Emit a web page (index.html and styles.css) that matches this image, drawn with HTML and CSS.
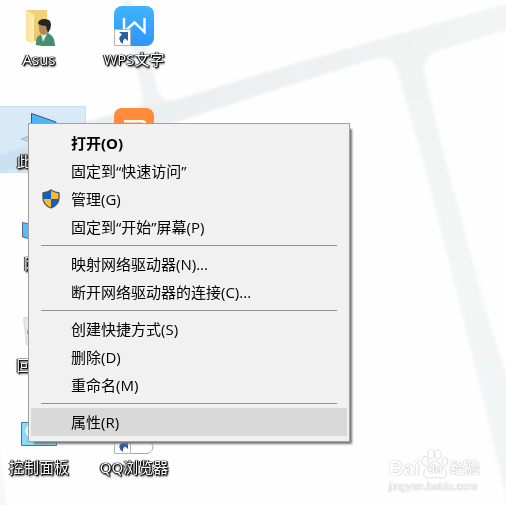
FILE: index.html
```html
<!DOCTYPE html>
<html lang="zh-CN">
<head>
<meta charset="utf-8">
<meta name="viewport" content="width=device-width, initial-scale=1">
<title>桌面</title>
<link rel="stylesheet" href="styles.css">
</head>
<body>
<svg class="wallpaper" viewBox="0 0 506 505" preserveAspectRatio="xMinYMin slice" aria-hidden="true">
  <defs>
    <filter id="soft" x="-5%" y="-5%" width="110%" height="110%"><feGaussianBlur stdDeviation="1.5"/></filter>
    <linearGradient id="bar" x1="0" y1="0" x2="1" y2="0">
      <stop offset="0" stop-color="#e3eeef"/><stop offset=".35" stop-color="#ebefef"/><stop offset="1" stop-color="#f3f4f4"/>
    </linearGradient>
    <linearGradient id="stem" x1="0" y1="0" x2="0" y2="1">
      <stop offset="0" stop-color="#f1f2f2"/><stop offset=".5" stop-color="#f4f5f5"/><stop offset="1" stop-color="#f0f5f4"/>
    </linearGradient>
  </defs>
  <g filter="url(#soft)">
    <path fill="#f0f3f4" d="M122 0h10l8 25 12 37 5 25q3 12 15 15l-20 18-12-8q4-10 1-25L131 45z"/>
    <path fill="url(#bar)" d="M-4 156Q40 146 86 122L140 106 176 100 290 65 395 35 510 3V29L440 50Q424 55 424 71L410 74 396 68Q392 55 377 58L300 82 176 122 86 140Q40 166-4 172z"/>
    <path fill="url(#stem)" d="M390 55L426 52Q423 60 424 71L440 140 463 225 487 315 510 385V510L502 480 476 370 446 250 423 160 397 70z"/>
    <path fill="#f5f7fa" d="M-4 440L1 460 7 510H-4z"/>
  </g>
</svg>

<main class="desktop">
  <button class="tile" type="button">
    <svg class="icon" viewBox="0 0 40 40" aria-hidden="true">
      <defs>
        <linearGradient id="fold"><stop offset="0" stop-color="#fae09a"/><stop offset="1" stop-color="#ffeeb8"/></linearGradient>
        <linearGradient id="back" x2="0" y2="1"><stop offset="0" stop-color="#f3d47c"/><stop offset="1" stop-color="#e9c564"/></linearGradient>
      </defs>
      <path fill="url(#back)" d="M7 4h21v31H14z"/>
      <path fill="url(#fold)" d="M7 4l8 5v26l-1 3-7-3.500z"/>
      <path fill="#458f70" d="M17 39q-1-10 7-11l5-1q7 3 7 13-10 1-19-1z"/>
      <path fill="#dceee6" d="M22 28l2 8 4-8z"/>
      <path fill="#b7845c" d="M20 18q0-4 5-3 5 1 5 7-1 7-5 7-5 0-5-7z"/>
      <path fill="#252525" d="M19 18q0-5 7-5 6 0 6 6 0 4-3 8l-1-3-1-4q-4 0-8-2z"/>
    </svg>
    <span class="label">Asus</span>
  </button>
  <button class="tile selected" type="button">
    <svg class="icon" viewBox="0 0 40 40" aria-hidden="true">
      <path fill="#4bb6f5" stroke="#47545c" d="M12.500 5.500L37 14v18L12.500 25z"/>
      <path fill="#c9cdd0" stroke="#9a9fa2" stroke-width=".6" d="M2 31l10-4 20 7-10 4z"/>
    </svg>
    <span class="label">此电脑</span>
  </button>
  <button class="tile" type="button">
    <svg class="icon" viewBox="0 0 40 40" aria-hidden="true">
      <path fill="#55bdf7" stroke="#536a78" d="M3.500 12.500L24 17v15L3.500 27z"/>
    </svg>
    <span class="label">网络</span>
  </button>
  <button class="tile" type="button">
    <svg class="icon" viewBox="0 0 40 40" aria-hidden="true">
      <path fill="#e6e8ea" stroke="#cdd0d2" stroke-width=".7" d="M4.500 6l6-1h22l-4 29-21-1z"/>
      <path fill="#3794d1" d="M9 16l3 5-4 1z"/>
    </svg>
    <span class="label">回收站</span>
  </button>
  <button class="tile" type="button">
    <svg class="icon" viewBox="0 0 40 40" aria-hidden="true">
      <path fill="#87dcfb" stroke="#2b7fa8" d="M2.500 8.500h35v23h-35z"/>
      <circle cx="13" cy="17" r="5.500" fill="none" stroke="#f2fcff" stroke-width="2"/>
      <path stroke="#e4af42" d="M7 27.500h8"/>
      <path stroke="#1683bd" stroke-width="2" d="M15 28h14"/>
    </svg>
    <span class="label">控制面板</span>
  </button>
  <button class="tile" type="button">
    <svg class="icon" viewBox="0 0 40 40" aria-hidden="true">
      <defs><linearGradient id="wps" x2="0" y2="1"><stop offset="0" stop-color="#3fb4ff"/><stop offset="1" stop-color="#3093fc"/></linearGradient></defs>
      <rect width="40" height="40" rx="8" fill="url(#wps)"/>
      <path fill="none" stroke="#fff" stroke-width="2.400" d="M10 12v14L20.500 16.500 30.500 26V12"/>
      <path fill="#fff" stroke="#b6b6b6" d="M.5 23.500h16v16H.5z"/>
      <path fill="#2b5ea5" d="M5 26h9v9l-3-2.500Q8.500 34 9 38q-7-5-1-9.500z"/>
    </svg>
    <span class="label">WPS文字</span>
  </button>
  <button class="tile" type="button" aria-label="WPS">
    <svg class="icon" viewBox="0 0 40 40" aria-hidden="true">
      <rect width="40" height="40" rx="8" fill="#ff8b3b"/>
      <path fill="none" stroke="#fff" stroke-width="2.500" d="M10 13.300h18q3 0 3 3v8H10"/>
    </svg>
  </button>
  <button class="tile last" type="button">
    <svg class="icon" viewBox="0 0 40 40" aria-hidden="true">
      <path fill="#fff" stroke="#89add7" d="M10 39.500h23c8-2 8-11-1-14-3-9-20-10-23 0"/>
      <path fill="#fff" stroke="#b6b6b6" d="M.5 23.500h16v16H.5z"/>
      <path fill="#2b5ea5" d="M5 26h9v9l-3-2.500Q8.500 34 9 38q-7-5-1-9.500z"/>
    </svg>
    <span class="label">QQ浏览器</span>
  </button>
</main>

<div class="menu" role="menu">
  <button class="item default" type="button" role="menuitem">打开(O)</button>
  <button class="item" type="button" role="menuitem">固定到“快速访问”</button>
  <button class="item" type="button" role="menuitem">
    <svg class="shield" viewBox="0 0 18 20" aria-hidden="true">
      <path fill="#fdb92e" d="M9 1q3 2 8 3v5q0 7-8 10-8-3-8-10V4q5-1 8-3z"/>
      <path fill="#0b62c4" d="M9 1v9H1V4q5-1 8-3zM9 10h8q-1 6-8 9z"/>
      <path fill="none" stroke="#50545a" stroke-width="1.300" d="M9 1q3 2 8 3v5q0 7-8 10-8-3-8-10V4q5-1 8-3z"/>
    </svg>管理(G)</button>
  <button class="item" type="button" role="menuitem">固定到“开始”屏幕(P)</button>
  <hr class="line">
  <button class="item" type="button" role="menuitem">映射网络驱动器(N)...</button>
  <button class="item" type="button" role="menuitem">断开网络驱动器的连接(C)...</button>
  <hr class="line">
  <button class="item" type="button" role="menuitem">创建快捷方式(S)</button>
  <button class="item" type="button" role="menuitem">删除(D)</button>
  <button class="item" type="button" role="menuitem">重命名(M)</button>
  <hr class="line">
  <button class="item active" type="button" role="menuitem">属性(R)</button>
</div>

<div class="watermark">
  <div class="brand">
    <span class="bai">Bai</span>
    <span class="paw">
      <svg viewBox="0 0 28 30" aria-hidden="true">
        <g fill="#fff" stroke="#dfdfdf">
          <ellipse cx="4" cy="12" rx="3" ry="4.500"/><ellipse cx="10" cy="5" rx="3.200" ry="4.500"/>
          <ellipse cx="17" cy="5.500" rx="3.200" ry="4.500"/><ellipse cx="24" cy="12.500" rx="3" ry="4"/>
          <path d="M14 12q4 0 6 5l5 5q2 7-5 7-6-1-12 0-7 0-5-7l5-5q2-5 6-5z"/>
        </g>
      </svg>
      <span class="du">du</span>
    </span>
    <span class="jy">经验</span>
  </div>
  <div class="site">jingyan.baidu.com</div>
</div>
</body>
</html>
```
FILE: styles.css
```css
* {
  box-sizing: border-box;
}

body {
  margin: 0;
  min-height: 100vh;
  overflow: hidden;
  background: #fefefe;
  font-family: "Open Sans", "Noto Sans CJK SC", sans-serif;
  font-size: 15px;
}

button {
  border: 0;
  margin: 0;
  background: none;
  font: inherit;
  color: inherit;
}

.wallpaper {
  position: fixed;
  inset: 0;
  width: 100%;
  height: 100%;
  z-index: -1;
}

/* Desktop icons fill the grid column by column */
.desktop {
  display: grid;
  grid-auto-flow: column;
  grid-template-rows: repeat(5, 102px);
  grid-auto-columns: 95px;
  margin-left: -8px;
  padding-top: 4px;
  height: 100vh;
}

.tile {
  display: flex;
  flex-direction: column;
  align-items: center;
  align-self: start;
  width: 94px;
  height: 67px;
  padding: 2px 0;
  gap: 3px;
}

.tile.selected {
  background: rgba(160, 203, 240, 0.4);
  box-shadow: inset 0 0 0 1px rgba(190, 218, 245, 0.5);
}

.tile.last {
  grid-row: 5;
}

.icon {
  flex: none;
  width: 40px;
  height: 40px;
}

.label {
  line-height: 20px;
  white-space: nowrap;
  color: #fff;
  text-shadow: 0 0 1px #000, 0 0 1px #000, -1px 0 1px #000, 1px 0 1px #000, 1px 1px 1px #000, 1px 2px 2px #444;
}

/* Context menu */
.menu {
  position: absolute;
  left: 28px;
  top: 123px;
  width: 322px;
  padding: 5px 2px;
  border: 1px solid #a0a0a0;
  background: #f1f1f1;
  box-shadow: 4px 4px 2px -2px #777;
  color: #000;
}

.item {
  position: relative;
  display: block;
  width: 100%;
  height: 28px;
  padding: 0 40px;
  line-height: 28px;
  text-align: left;
  white-space: nowrap;
}

.item.default {
  font-weight: 700;
}

.item.active {
  background: #d9d9d9;
}

.shield {
  position: absolute;
  left: 11px;
  top: 4px;
  width: 18px;
  height: 20px;
}

.line {
  height: 1px;
  margin: 4px 10px;
  border: 0;
  background: #919191;
}

/* Watermark */
.watermark {
  position: absolute;
  right: 26px;
  bottom: 12px;
  color: #fff;
  font-family: "Liberation Sans", "Noto Sans CJK SC", sans-serif;
  text-shadow: 0 0 1px #aaa, 0 0 1px #bbb;
}

.brand {
  display: flex;
  align-items: center;
  gap: 1px;
  height: 30px;
  font-weight: 700;
}

.bai {
  padding-top: 8px;
  font-size: 20px;
  line-height: 20px;
}

.paw {
  position: relative;
  width: 28px;
  height: 30px;
}

.du {
  position: absolute;
  inset: 11px 0 auto;
  text-align: center;
  font-size: 12px;
  line-height: 18px;
}

.jy {
  padding-top: 8px;
  font-size: 15px;
  line-height: 16px;
}

.site {
  font-size: 11px;
  line-height: 14px;
}
```
